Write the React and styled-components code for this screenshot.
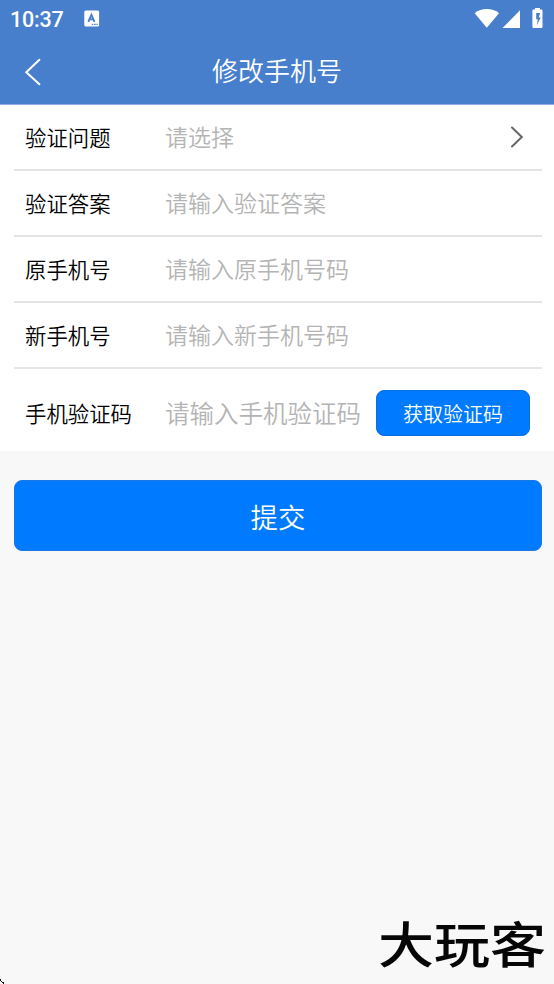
import React from "react";
import styled, { createGlobalStyle } from "styled-components";

const GlobalStyle = createGlobalStyle`
  * { box-sizing: border-box; }
  body {
    margin: 0;
    background: #f8f8f8;
    font-family: "Noto Sans CJK SC", sans-serif;
  }
  button, input { font-family: inherit; }
`;

const Screen = styled.div`
  min-height: 984px;
  display: flex;
  flex-direction: column;
  background: #f8f8f8;
`;

const Header = styled.header`
  height: 105px;
  background: #477fcd;
  border-bottom: 1px solid #8fb1e1;
  color: #fff;
`;

const StatusBar = styled.div`
  height: 38px;
  padding: 0 10px;
  display: flex;
  align-items: center;
`;

const Clock = styled.span`
  width: 74px;
  padding-top: 2px;
  font: 500 21.5px/38px Roboto, sans-serif;
  letter-spacing: -0.2px;
  white-space: nowrap;
`;

const Badge = styled.svg`
  display: block;
  margin-bottom: 2px;
`;

const StatusIcons = styled.svg`
  display: block;
  margin-left: auto;
`;

const NavBar = styled.div`
  height: 66px;
  display: grid;
  grid-template-columns: 66px 1fr 66px;
  align-items: center;
`;

const BackButton = styled.button`
  height: 66px;
  padding: 1px 0 0 24px;
  border: 0;
  background: none;
  color: #fff;
  display: flex;
  align-items: center;
`;

const Title = styled.h1`
  margin: 0 0 3px;
  font-size: 26px;
  line-height: 40px;
  font-weight: 350;
  text-align: center;
`;

const Form = styled.section`
  background: #fff;
  padding: 0 12px 0 14px;
`;

const Row = styled.div`
  height: ${(p) => (p.$last ? 82 : 66)}px;
  padding: ${(p) => (p.$last ? "6px 12px 0 11px" : "0 18px 0 11px")};
  border-bottom: ${(p) => (p.$last ? "0" : "2px solid #e4e4e4")};
  display: flex;
  align-items: center;
`;

const Label = styled.span`
  width: 140px;
  flex: none;
  font-size: 21.4px;
  line-height: 32px;
  font-weight: 350;
  color: #000;
  white-space: nowrap;
`;

const Placeholder = styled.span`
  flex: 1;
  padding-bottom: ${(p) => (p.$size ? 0 : 2)}px;
  font-size: ${(p) => p.$size || 23}px;
  line-height: 34px;
  font-weight: 350;
  color: #b4b4b4;
  white-space: nowrap;
`;

const CodeButton = styled.button`
  width: 154px;
  height: 46px;
  flex: none;
  padding: 1px 0 0;
  border: 1px solid #0a6fdc;
  border-radius: 8px;
  background: #007aff;
  color: #fff;
  font-size: 20px;
  font-weight: 350;
  line-height: 30px;
`;

const SubmitButton = styled.button`
  margin: 29px 12px 0 14px;
  height: 71px;
  padding: 1px 0 0;
  border: 1px solid #1a79e0;
  border-radius: 8px;
  background: #007aff;
  color: #fff;
  font-size: 27.4px;
  font-weight: 350;
  line-height: 40px;
`;

const Footer = styled.footer`
  margin-top: auto;
  height: 76px;
  padding-right: 8px;
  display: flex;
  align-items: flex-start;
  justify-content: flex-end;
  position: relative;
`;

const Brand = styled.span`
  font-size: 56px;
  line-height: 68px;
  font-weight: 500;
  color: #060606;
  white-space: nowrap;
  transform: scaleY(0.88);
`;

const Corner = styled.svg`
  position: absolute;
  left: 0;
  bottom: 0;
`;

const fields = [
  { label: "验证问题", hint: "请选择", select: true },
  { label: "验证答案", hint: "请输入验证答案" },
  { label: "原手机号", hint: "请输入原手机号码" },
  { label: "新手机号", hint: "请输入新手机号码" },
];

function InputBadge() {
  return (
    <Badge width="16" height="17" viewBox="0 0 16 17">
      <rect x="0.3" y="0.5" width="14.8" height="16" rx="1.5" fill="#fff" />
      <path d="M4.3 11.8 7.4 4.8 10.5 11.8M5.5 9.4h3.8" fill="none" stroke="#477fcd" strokeWidth="1.9" />
      <path d="M7.8 14.3h1.5M10.2 14.3h1.5M12.5 14.3h1.3" stroke="#477fcd" strokeWidth="1.2" />
    </Badge>
  );
}

function DeviceStatus() {
  return (
    <StatusIcons width="70" height="22" viewBox="0 0 70 22" fill="#fff">
      <path d="M.7 5.3C7 -.3 18.6 -.3 25 5.3L12.8 19.7Z" />
      <path d="M46 2.3V20H28.5Z" />
      <path fillRule="evenodd" d="M61 0h5v1.5h1.4q1.1 0 1.1 1.1V18.9q0 1.1-1.1 1.1h-7.9q-1.1 0-1.1-1.1V2.6q0-1.1 1.1-1.1H61ZM62.2 5v6.2h1.6l-.9 6.1 3.8-7.7h-2L66.2 5Z" />
    </StatusIcons>
  );
}

export default function App() {
  return (
    <>
      <GlobalStyle />
      <Screen>
        <Header>
          <StatusBar>
            <Clock>10:37</Clock>
            <InputBadge />
            <DeviceStatus />
          </StatusBar>
          <NavBar>
            <BackButton aria-label="返回">
              <svg width="18" height="28" viewBox="0 0 18 28" fill="none" stroke="currentColor" strokeWidth="2" strokeLinecap="round">
                <path d="M15.4 1.8 2.3 14.2 15.4 26.2" />
              </svg>
            </BackButton>
            <Title>修改手机号</Title>
          </NavBar>
        </Header>
        <Form>
          {fields.map((f) => (
            <Row key={f.label}>
              <Label>{f.label}</Label>
              <Placeholder>{f.hint}</Placeholder>
              {f.select && (
                <svg width="14" height="22" viewBox="0 0 14 22" fill="none" stroke="#666" strokeWidth="2" strokeLinecap="round">
                  <path d="M2 1.5 11.8 11 2 20.5" />
                </svg>
              )}
            </Row>
          ))}
          <Row $last>
            <Label>手机验证码</Label>
            <Placeholder $size={24.5}>请输入手机验证码</Placeholder>
            <CodeButton>获取验证码</CodeButton>
          </Row>
        </Form>
        <SubmitButton>提交</SubmitButton>
        <Footer>
          <Corner width="5" height="5" viewBox="0 0 5 5" fill="#111">
            <path d="M0 0h1v2H0ZM1 2h1v1H1ZM2 3h2v1H2ZM3 4h1v1H3Z" />
          </Corner>
          <Brand>大玩客</Brand>
        </Footer>
      </Screen>
    </>
  );
}
